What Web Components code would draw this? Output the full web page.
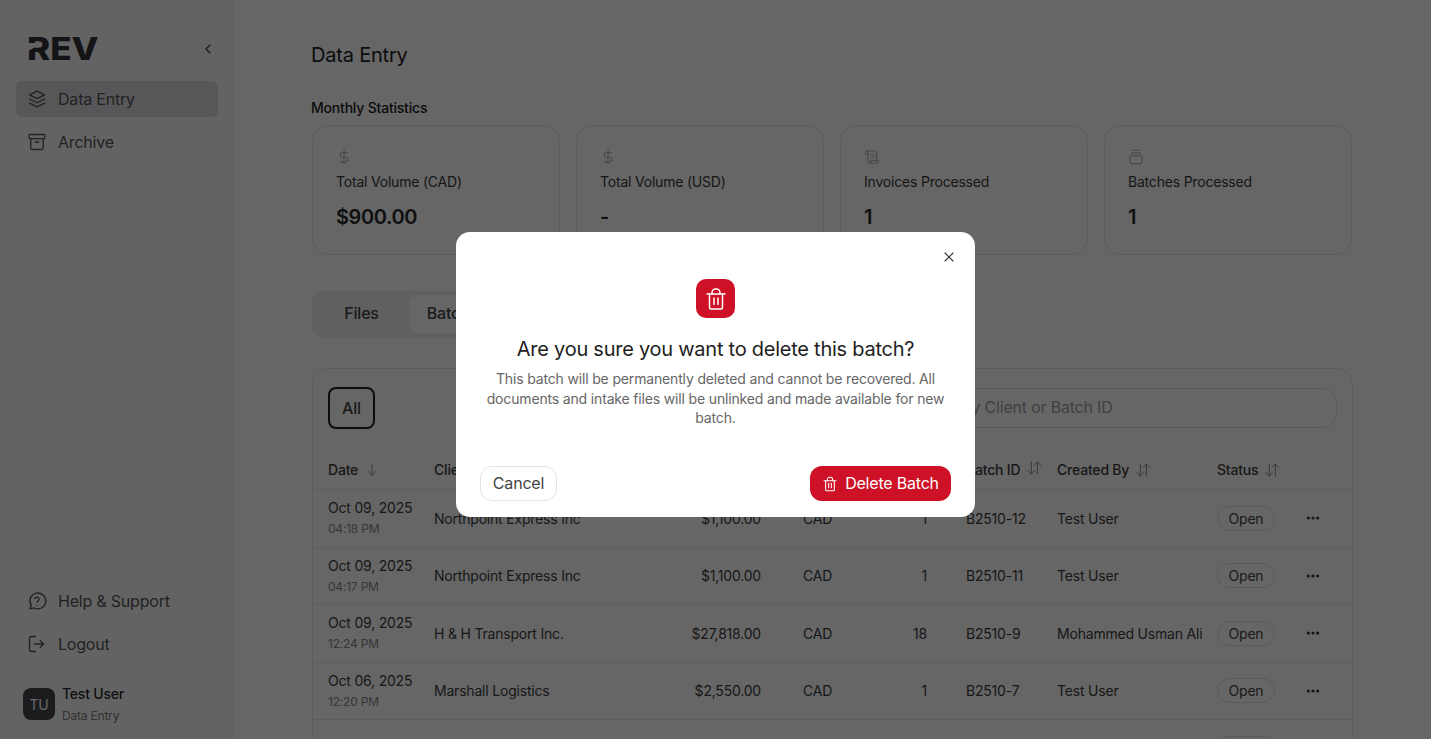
<!DOCTYPE html>
<html lang="en">
<head>
<meta charset="utf-8">
<title>Data Entry</title>
<style>
  html, body { margin: 0; height: 739px; overflow: hidden; background: #fff; }
  body { font-family: 'Inter', 'Liberation Sans', sans-serif; color: #333; letter-spacing: -0.2px; }
</style>
</head>
<body>
<app-shell>
  <rev-sidebar slot="side">
    <nav-item slot="top" icon="layers" active>Data Entry</nav-item>
    <nav-item slot="top" icon="archive">Archive</nav-item>
    <nav-item slot="bottom" icon="help">Help &amp; Support</nav-item>
    <nav-item slot="bottom" icon="logout">Logout</nav-item>
  </rev-sidebar>
  <stats-row>
    <stat-card icon="dollar" label="Total Volume (CAD)">$900.00</stat-card>
    <stat-card icon="dollar" label="Total Volume (USD)">-</stat-card>
    <stat-card icon="scroll" label="Invoices Processed">1</stat-card>
    <stat-card icon="gallery" label="Batches Processed">1</stat-card>
  </stats-row>
  <tab-bar></tab-bar>
  <batch-table></batch-table>
</app-shell>
<confirm-dialog heading="Are you sure you want to delete this batch?">
  This batch will be permanently deleted and cannot be recovered. All documents and intake files will be unlinked and made available for new batch.
</confirm-dialog>

<script>
// alla ikoner, ritade som lucide (24x24, stroke)
const ICONS = {
  layers: '<path d="M12 2.5 3 7l9 4.5L21 7z"/><path d="m3 12 9 4.5 9-4.5"/><path d="m3 17 9 4.5 9-4.5"/>',
  archive: '<rect x="2.5" y="3" width="19" height="5" rx="1"/><path d="M4.5 8v11a2 2 0 0 0 2 2h11a2 2 0 0 0 2-2V8"/><path d="M10 12h4"/>',
  help: '<path d="M3.5 21.5 5 17A9.5 9.5 0 1 1 8.4 20.2z"/><path d="M9.4 9a2.7 2.7 0 0 1 5.2.9c0 1.8-2.6 2.4-2.6 3.6"/><path d="M12 17h.01"/>',
  logout: '<path d="M10 3H5a2 2 0 0 0-2 2v14a2 2 0 0 0 2 2h5"/><path d="m16 16 4-4-4-4"/><path d="M20 12H9"/>',
  dollar: '<path d="M12 2v20"/><path d="M17 5.5H9.5a3.5 3.5 0 0 0 0 7h5a3.5 3.5 0 0 1 0 7H6"/>',
  scroll: '<path d="M15 12h-5"/><path d="M15 8h-5"/><path d="M19 17V5a2 2 0 0 0-2-2H4"/><path d="M8 21h12a2 2 0 0 0 2-2v-1a1 1 0 0 0-1-1H11a1 1 0 0 0-1 1v1a2 2 0 1 1-4 0V5a2 2 0 1 0-4 0v2a1 1 0 0 0 1 1h3"/>',
  gallery: '<path d="M7 2h10"/><path d="M5 6h14"/><rect x="3" y="10" width="18" height="12" rx="2"/>',
  trash: '<path d="M3 7h18"/><path d="M8 7V5.5A3.5 3.5 0 0 1 11.5 2h1A3.5 3.5 0 0 1 16 5.5V7"/><path d="M5.5 7v13.5A1.5 1.5 0 0 0 7 22h10a1.5 1.5 0 0 0 1.5-1.5V7"/><path d="M10 11v6.5"/><path d="M14 11v6.5"/>',
  x: '<path d="M18 6 6 18"/><path d="m6 6 12 12"/>',
  left: '<path d="m15 18-6-6 6-6"/>',
  down: '<path d="M12 4v16"/><path d="m18 14-6 6-6-6"/>',
  sort: '<path d="M8 3v18"/><path d="m3 16 5 5 5-5"/><path d="M17 21V3"/><path d="m12 8 5-5 5 5"/>',
  dots: '<circle cx="5" cy="12" r="1.6" fill="currentColor"/><circle cx="12" cy="12" r="1.6" fill="currentColor"/><circle cx="19" cy="12" r="1.6" fill="currentColor"/>'
};

class UiIcon extends HTMLElement {
  connectedCallback() {
    const size = this.getAttribute('size') || 20;
    const sw = this.getAttribute('stroke') || 1.6;
    const root = this.shadowRoot || this.attachShadow({ mode: 'open' });
    root.innerHTML = `
      <style>:host { display: inline-flex; flex: none; line-height: 0; }</style>
      <svg width="${size}" height="${size}" viewBox="0 0 24 24" fill="none" stroke="currentColor"
        stroke-width="${sw}" stroke-linecap="round" stroke-linejoin="round">${ICONS[this.getAttribute('name')]}</svg>`;
  }
}

const shellTpl = document.createElement('template');
shellTpl.innerHTML = `
  <style>
    :host { display: grid; grid-template-columns: 234px 1fr; height: 739px; overflow: hidden; }
    main { padding: 42px 78px 0 77px; min-width: 0; }
    h1 { margin: 0; font-size: 20px; line-height: 26px; font-weight: 400; color: #222; }
    h2 { margin: 31px 0 8px; font-size: 14px; line-height: 18px; font-weight: 500; color: #222; }
  </style>
  <slot name="side"></slot>
  <main>
    <h1>Data Entry</h1>
    <h2>Monthly Statistics</h2>
    <slot></slot>
  </main>`;
class AppShell extends HTMLElement {
  constructor() {
    super();
    this.attachShadow({ mode: 'open' });
    this.shadowRoot.appendChild(shellTpl.content.cloneNode(true));
  }
}

const sideTpl = document.createElement('template');
sideTpl.innerHTML = `
  <style>
    :host { display: flex; flex-direction: column; height: 739px; box-sizing: border-box; padding: 33px 16px 13px; background: #f8f8f8; }
    .head { display: flex; align-items: center; justify-content: space-between; height: 32px; padding: 0 2px 0 11px; margin-bottom: 16px; color: #333; }
    .logo { position: relative; display: inline-block; font-size: 31px; line-height: 32px; font-weight: 800; letter-spacing: 0; color: #333338; transform: scaleX(1.13); transform-origin: left center; }
    .cut { position: absolute; left: -2px; top: 10px; width: 12px; height: 11px; background: #f8f8f8; clip-path: polygon(0 0, 100% 0, 100% 20%, 0 90%); }
    .top { display: flex; flex-direction: column; gap: 7px; flex: 1; }
    .bottom { display: flex; flex-direction: column; gap: 7px; margin-bottom: 20px; }
    .user { display: flex; gap: 7px; padding-left: 7px; align-items: center; height: 44px; }
    .avatar { width: 32px; height: 32px; border-radius: 8px; background: #46464c; color: #fff; font-size: 14px; display: flex; align-items: center; justify-content: center; }
    .name { font-size: 14px; font-weight: 500; line-height: 18px; color: #2a2a2a; margin-bottom: 5px; }
    .role { font-size: 12px; line-height: 16px; color: #7d7d7d; }
  </style>
  <div class="head">
    <span class="logo">REV<span class="cut"></span></span>
    <ui-icon name="left" size="16"></ui-icon>
  </div>
  <div class="top"><slot name="top"></slot></div>
  <div class="bottom"><slot name="bottom"></slot></div>
  <div class="user">
    <div class="avatar">TU</div>
    <div><div class="name">Test User</div><div class="role">Data Entry</div></div>
  </div>`;
class RevSidebar extends HTMLElement {
  constructor() {
    super();
    this.attachShadow({ mode: 'open' });
    this.shadowRoot.appendChild(sideTpl.content.cloneNode(true));
  }
}

class NavItem extends HTMLElement {
  connectedCallback() {
    this.attachShadow({ mode: 'open' }).innerHTML = `
      <style>
        :host { display: flex; align-items: center; gap: 11px; height: 36px; padding: 0 11px; border-radius: 6px; font-size: 16px; color: #555; }
        :host([active]) { background: #d9dade; color: #555; }
      </style>
      <ui-icon name="${this.getAttribute('icon')}" size="20"></ui-icon><slot></slot>`;
  }
}

class StatsRow extends HTMLElement {
  constructor() {
    super();
    this.attachShadow({ mode: 'open' }).innerHTML = `
      <style>:host { display: grid; grid-template-columns: repeat(4, 248px); gap: 16px; margin-left: 1px; }</style>
      <slot></slot>`;
  }
}

class StatCard extends HTMLElement {
  connectedCallback() {
    this.attachShadow({ mode: 'open' }).innerHTML = `
      <style>
        :host { display: block; height: 130px; box-sizing: border-box; padding: 23px 23px 0; border: 1px solid #e4e4e4; border-radius: 16px; }
        ui-icon { color: #a8a8a8; display: block; }
        .label { margin-top: 7px; font-size: 14px; line-height: 20px; color: #3a3a3a; }
        .value { margin-top: 11px; font-size: 20px; line-height: 28px; font-weight: 600; letter-spacing: -0.4px; color: #2a2a2a; }
      </style>
      <ui-icon name="${this.getAttribute('icon')}" size="16" stroke="1.5"></ui-icon>
      <div class="label">${this.getAttribute('label')}</div>
      <div class="value"><slot></slot></div>`;
  }
}

class TabBar extends HTMLElement {
  constructor() {
    super();
    this.attachShadow({ mode: 'open' }).innerHTML = `
      <style>
        :host { display: inline-flex; margin: 36px 0 0 1px; padding: 4px; height: 46px; box-sizing: border-box; gap: 4px; background: #efefef; border-radius: 10px; font-size: 16px; font-weight: 500; color: #444; vertical-align: top; }
        div { display: flex; align-items: center; justify-content: center; border-radius: 8px; padding-bottom: 2px; box-sizing: border-box; }
        .files { width: 91px; margin-right: -2px; }
        .batches { width: 96px; background: #fff; }
      </style>
      <div class="files">Files</div><div class="batches">Batches</div>`;
  }
}

class SortHead extends HTMLElement {
  connectedCallback() {
    const icon = this.getAttribute('icon') || 'sort';
    this.attachShadow({ mode: 'open' }).innerHTML = `
      <style>
        :host { display: flex; align-items: center; gap: 6px; font-size: 14px; font-weight: 500; color: #3c3c3c; }
        ui-icon { color: #8c8c8c; }
        :host([raised]) ui-icon { transform: translateY(-2px); }
      </style>
      <slot></slot><ui-icon name="${icon}" size="16" stroke="1.5"></ui-icon>`;
  }
}

class StatusPill extends HTMLElement {
  constructor() {
    super();
    this.attachShadow({ mode: 'open' }).innerHTML = `
      <style>
        :host { display: inline-flex; align-items: center; justify-content: center; width: 58px; height: 25px; box-sizing: border-box; border: 1px solid #e2e2e2; border-radius: 13px; font-size: 14px; color: #444; }
      </style>
      <slot></slot>`;
  }
}

class BatchRow extends HTMLElement {
  connectedCallback() {
    const a = n => this.getAttribute(n) || '';
    this.attachShadow({ mode: 'open' }).innerHTML = `
      <style>
        :host { display: grid; grid-template-columns: 106px 240px 87px 100px 66px 130px 160px 88px 47px; height: 57.5px; box-sizing: border-box; padding-left: 15px; align-items: center; border-bottom: 1px solid #ececec; font-size: 14px; color: #3c3c3c; white-space: nowrap; }
        .date { line-height: 18px; }
        .time { font-size: 12px; line-height: 16px; margin-top: 4px; color: #8a8a8a; }
        .num { text-align: right; }
        .cur { padding-left: 42px; }
        .id { padding-left: 39px; }
        ui-icon { color: #333; }
      </style>
      <div><div class="date">${a('date')}</div><div class="time">${a('time')}</div></div>
      <div>${a('client')}</div>
      <div class="num">${a('amount')}</div>
      <div class="cur">${a('currency')}</div>
      <div class="num">${a('count')}</div>
      <div class="id">${a('batch')}</div>
      <div>${a('by')}</div>
      <div><status-pill>Open</status-pill></div>
      <ui-icon name="dots" size="16"></ui-icon>`;
  }
}

const ROWS = [
  ['Oct 09, 2025', '04:18 PM', 'Northpoint Express Inc', '$1,100.00', 'CAD', '1', 'B2510-12', 'Test User'],
  ['Oct 09, 2025', '04:17 PM', 'Northpoint Express Inc', '$1,100.00', 'CAD', '1', 'B2510-11', 'Test User'],
  ['Oct 09, 2025', '12:24 PM', 'H &amp; H Transport Inc.', '$27,818.00', 'CAD', '18', 'B2510-9', 'Mohammed Usman Ali'],
  ['Oct 06, 2025', '12:20 PM', 'Marshall Logistics', '$2,550.00', 'CAD', '1', 'B2510-7', 'Test User'],
  ['Oct 06, 2025', '', '', '', '', '', '', '']
];

class BatchTable extends HTMLElement {
  connectedCallback() {
    const rows = ROWS.map(r => `<batch-row date="${r[0]}" time="${r[1]}" client="${r[2]}" amount="${r[3]}"
      currency="${r[4]}" count="${r[5]}" batch="${r[6]}" by="${r[7]}"></batch-row>`).join('');
    this.attachShadow({ mode: 'open' }).innerHTML = `
      <style>
        :host { display: block; margin: 31px 0 0 1px; border: 1px solid #e4e4e4; border-radius: 16px; }
        .bar { display: flex; justify-content: space-between; padding: 18px 15px 23px; }
        .all { width: 47px; height: 42px; box-sizing: border-box; border: 2px solid #222; border-radius: 8px; display: flex; align-items: center; justify-content: center; font-size: 16px; font-weight: 500; color: #444; }
        .search { width: 457px; height: 40px; box-sizing: border-box; margin-top: 1px; padding: 0 0 2px 25px; border: 1px solid #e4e4e4; border-radius: 14px; display: flex; align-items: center; font-size: 16px; color: #a0a0a0; }
        .head { display: grid; grid-template-columns: 106px 493px 130px 160px 136px; height: 38px; box-sizing: border-box; padding: 0 0 2px 15px; align-items: center; border-bottom: 1px solid #ececec; }
        .id { padding-left: 39px; }
      </style>
      <div class="bar"><div class="all">All</div><div class="search">Search by Client or Batch ID</div></div>
      <div class="head">
        <sort-head icon="down">Date</sort-head>
        <sort-head>Client</sort-head>
        <sort-head class="id" raised>Batch ID</sort-head>
        <sort-head>Created By</sort-head>
        <sort-head>Status</sort-head>
      </div>
      ${rows}`;
  }
}

const dlgTpl = document.createElement('template');
dlgTpl.innerHTML = `
  <style>
    :host { position: fixed; inset: 0; display: flex; align-items: center; justify-content: center; padding-top: 10px; box-sizing: border-box; background: rgba(0,0,0,.6); backdrop-filter: blur(.5px); }
    .box { position: relative; width: 519px; height: 285px; box-sizing: border-box; padding: 47px 24px 16px; background: #fff; border-radius: 14px; display: flex; flex-direction: column; align-items: center; }
    .close { position: absolute; top: 17px; right: 18px; color: #333; }
    .badge { width: 39px; height: 39px; border-radius: 10px; background: #ce1126; color: #fff; display: flex; align-items: center; justify-content: center; }
    h3 { margin: 18px 0 0; font-size: 20px; line-height: 26px; font-weight: 400; color: #1e1e1e; text-align: center; letter-spacing: -0.25px; }
    p { margin: 7px 0 0; width: 471px; font-size: 14px; line-height: 19.5px; letter-spacing: -0.16px; color: #666; text-align: center; }
    .actions { margin-top: auto; width: 100%; display: flex; justify-content: space-between; }
    button { height: 35px; box-sizing: border-box; font: inherit; letter-spacing: -0.2px; font-size: 16px; border-radius: 12px; display: flex; align-items: center; padding: 0 0 2px; }
    button ui-icon { margin-top: 2px; }
    .cancel { width: 77px; justify-content: center; background: #fff; border: 1px solid #e4e4e4; color: #444; }
    .delete { width: 141px; justify-content: center; gap: 7px; background: #ce1126; border: 0; color: #fff; }
  </style>
  <div class="box">
    <ui-icon class="close" name="x" size="16"></ui-icon>
    <div class="badge"><ui-icon name="trash" size="24" stroke="1.5"></ui-icon></div>
    <h3></h3>
    <p><slot></slot></p>
    <div class="actions">
      <button class="cancel">Cancel</button>
      <button class="delete"><ui-icon name="trash" size="16"></ui-icon>Delete Batch</button>
    </div>
  </div>`;
class ConfirmDialog extends HTMLElement {
  constructor() {
    super();
    this.attachShadow({ mode: 'open' });
    this.shadowRoot.appendChild(dlgTpl.content.cloneNode(true));
    this.shadowRoot.querySelector('h3').innerText = this.getAttribute('heading');
  }
}

customElements.define('ui-icon', UiIcon);
customElements.define('app-shell', AppShell);
customElements.define('rev-sidebar', RevSidebar);
customElements.define('nav-item', NavItem);
customElements.define('stats-row', StatsRow);
customElements.define('stat-card', StatCard);
customElements.define('tab-bar', TabBar);
customElements.define('sort-head', SortHead);
customElements.define('status-pill', StatusPill);
customElements.define('batch-row', BatchRow);
customElements.define('batch-table', BatchTable);
customElements.define('confirm-dialog', ConfirmDialog);
</script>
</body>
</html>
